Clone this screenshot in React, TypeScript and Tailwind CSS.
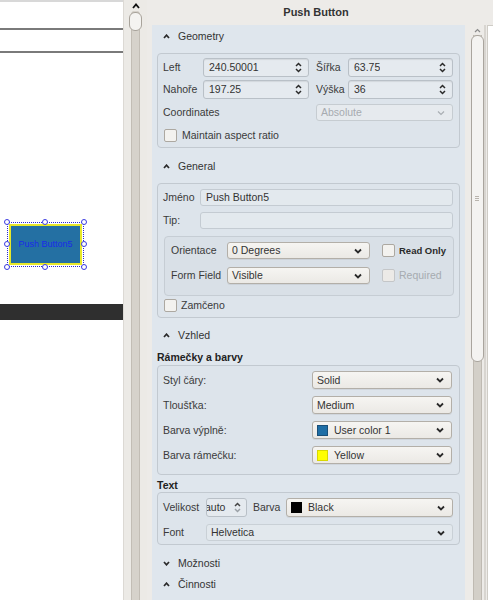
import React from "react";

const FONT = { fontFamily: '"Liberation Sans", Arial, sans-serif' };

function SpinArrows({ disabled }: { disabled?: boolean }) {
  const c = disabled ? "#9aa0a6" : "#2a2a2a";
  return (
    <svg width="7" height="11" viewBox="0 0 7 11" className="shrink-0">
      <path d="M1 4 L3.5 1.5 L6 4" fill="none" stroke={disabled ? "#444" : c} strokeWidth="1.5" />
      <path d="M1 7 L3.5 9.5 L6 7" fill="none" stroke={c} strokeWidth="1.5" />
    </svg>
  );
}

function ComboArrow({ disabled }: { disabled?: boolean }) {
  const c = disabled ? "#a9aeb3" : "#2a2a2a";
  return (
    <svg width="8" height="6" viewBox="0 0 8 6" className="shrink-0">
      <path d="M1 1.5 L4 4.5 L7 1.5" fill="none" stroke={c} strokeWidth={disabled ? 1.2 : 1.8} />
    </svg>
  );
}

function Caret({ down }: { down?: boolean }) {
  return (
    <svg width="7" height="5" viewBox="0 0 7 5" className="shrink-0">
      {down ? (
        <path d="M1 1 L3.5 3.8 L6 1" fill="none" stroke="#2a2a2a" strokeWidth="1.7" />
      ) : (
        <path d="M1 4 L3.5 1.2 L6 4" fill="none" stroke="#2a2a2a" strokeWidth="1.7" />
      )}
    </svg>
  );
}

function SpinBox({ value, className }: { value: string; className: string }) {
  return (
    <div
      className={`h-[19px] flex items-center justify-between pl-[5px] pr-[6px] rounded-[3px] border border-[#b9c0c7] bg-[#e5eaef] shadow-[inset_0_1px_1px_rgba(0,0,0,0.08)] text-[#333] ${className}`}
    >
      <span className="whitespace-nowrap overflow-hidden">{value}</span>
      <SpinArrows />
    </div>
  );
}

function Combo({
  children,
  className,
  disabled,
  flat,
}: {
  children: React.ReactNode;
  className: string;
  disabled?: boolean;
  flat?: boolean;
}) {
  const style = disabled
    ? "border-[#c6ccd1] bg-[#e6eaee] text-[#a6abb0]"
    : flat
    ? "border-[#c9d0d6] bg-[#e2e8ed] text-[#333]"
    : "border-[#b3afa8] bg-gradient-to-b from-[#f6f5f2] to-[#ebe9e5] text-[#333] shadow-[0_1px_0_rgba(0,0,0,0.06)]";
  return (
    <div
      className={`flex items-center justify-between pl-[4px] pr-[7px] rounded-[3px] border ${style} ${className}`}
    >
      <div className="flex items-center gap-[4px] whitespace-nowrap">{children}</div>
      <ComboArrow disabled={disabled} />
    </div>
  );
}

function Check({ disabled }: { disabled?: boolean }) {
  return (
    <div
      className={`w-[13px] h-[13px] rounded-[2px] border shrink-0 ${
        disabled ? "border-[#c4c6c8] bg-[#eceae7]" : "border-[#aca8a1] bg-[#f3f2ef]"
      }`}
    />
  );
}

function Header({ label, down }: { label: string; down?: boolean }) {
  return (
    <div className="h-[16px] flex items-center pl-[6px] gap-[8px] text-[#333]">
      <Caret down={down} />
      <span>{label}</span>
    </div>
  );
}

export default function App() {
  return (
    <div
      className="w-[493px] h-[600px] flex overflow-hidden bg-[#edebe8] text-[10.5px] leading-none text-[#3a3a3a]"
      style={FONT}
    >
      {/* Left canvas */}
      <div className="w-[123px] h-full bg-white flex flex-col shrink-0 border-t-2 border-[#d8d8d8]">
        <div className="h-[26px]" />
        <div className="h-[2px] bg-[#7a7a7a]" />
        <div className="h-[21px]" />
        <div className="h-[2px] bg-[#7a7a7a]" />
        <div className="h-[169px]" />
        <div className="h-[46px] pl-[7px] flex items-start">
          <div className="relative w-[77px] h-[45px]">
            <div className="absolute inset-0 border border-dotted border-[#2a2ad0]" />
            <div className="absolute left-[2px] top-[2px] right-[2px] bottom-[2px] border-2 border-[#e8e82a] bg-[#2470a3] flex items-center justify-center">
              <span className="text-[9px] text-[#1a2be8]">Push Button5</span>
            </div>
            {[
              "left-[-3px] top-[-3px]",
              "left-[35px] top-[-3px]",
              "right-[-3px] top-[-3px]",
              "left-[-3px] top-[19px]",
              "right-[-3px] top-[19px]",
              "left-[-3px] bottom-[-3px]",
              "left-[35px] bottom-[-3px]",
              "right-[-3px] bottom-[-3px]",
            ].map((p) => (
              <div key={p} className={`absolute w-[6px] h-[6px] rounded-full border border-[#3a3ae0] bg-white ${p}`} />
            ))}
          </div>
        </div>
        <div className="h-[36px]" />
        <div className="h-[16px] bg-[#2f2f2f]" />
      </div>

      {/* Left scrollbar */}
      <div className="w-[24px] h-full shrink-0 flex flex-col items-center border-l border-[#dcd9d4] bg-[#eceae6]">
        <div className="h-[11px] flex items-center justify-center">
          <svg width="8" height="6" viewBox="0 0 8 6">
            <path d="M1 5 L4 1.5 L7 5" fill="none" stroke="#111" strokeWidth="1.8" />
          </svg>
        </div>
        <div className="relative flex-1 w-[9px] bg-[#d6d2cb] border-x border-[#c2bdb5] rounded-t-[4px]">
          <div className="absolute left-[-3px] top-[1px] w-[13px] h-[19px] rounded-[6px] border border-[#a8a39b] bg-[#f4f3f1]" />
        </div>
      </div>

      {/* Dock */}
      <div className="flex-1 h-full flex flex-col">
        <div className="h-[25px] flex items-center">
          <div className="w-[338px] text-center font-bold text-[11px] text-[#333]">Push Button</div>
        </div>
        <div className="flex-1 flex">
          <div className="w-[5px]" />
          {/* Blue panel */}
          <div className="w-[313px] bg-[#dfe6ed] px-[5px] pt-[3px] flex flex-col">
            <Header label="Geometry" />
            {/* Geometry box */}
            <div className="mt-[9px] h-[95px] rounded-[4px] border border-[#c2c9d0] bg-[#dde4eb] pl-[5px] pr-[6px] pt-[4px] flex flex-col">
              <div className="flex items-center h-[19px]">
                <span className="w-[40px]">Left</span>
                <SpinBox value="240.50001" className="w-[106px]" />
                <span className="w-[32px] ml-[7px]">Šířka</span>
                <SpinBox value="63.75" className="w-[105px]" />
              </div>
              <div className="flex items-center h-[19px] mt-[3px]">
                <span className="w-[40px]">Nahoře</span>
                <SpinBox value="197.25" className="w-[106px]" />
                <span className="w-[32px] ml-[7px]">Výška</span>
                <SpinBox value="36" className="w-[105px]" />
              </div>
              <div className="flex items-center justify-between h-[17px] mt-[5px]">
                <span>Coordinates</span>
                <Combo disabled className="w-[137px] h-[17px]">
                  <span>Absolute</span>
                </Combo>
              </div>
              <div className="flex items-center h-[13px] mt-[8px] gap-[5px] pl-[1px]">
                <Check />
                <span>Maintain aspect ratio</span>
              </div>
            </div>

            <div className="mt-[10px]">
              <Header label="General" />
            </div>
            {/* General box */}
            <div className="mt-[9px] h-[135px] rounded-[4px] border border-[#c2c9d0] bg-[#dde4eb] pl-[5px] pr-[6px] pt-[5px] flex flex-col">
              <div className="flex items-center h-[17px]">
                <span className="w-[37px]">Jméno</span>
                <div className="flex-1 h-[17px] rounded-[3px] border border-[#c4cbd2] bg-[#e3e9ee] flex items-center pl-[5px] text-[#333]">
                  Push Button5
                </div>
              </div>
              <div className="flex items-center h-[17px] mt-[6px]">
                <span className="w-[37px]">Tip:</span>
                <div className="flex-1 h-[17px] rounded-[3px] border border-[#c4cbd2] bg-[#e3e9ee]" />
              </div>
              <div className="mt-[7px] ml-[1px] mr-[-1px] h-[60px] rounded-[4px] border border-[#c6cdd4] bg-[#d9e0e7] pl-[6px] pt-[5px] flex flex-col">
                <div className="flex items-center h-[17px]">
                  <span className="w-[56px]">Orientace</span>
                  <Combo className="w-[143px] h-[17px]">
                    <span>0 Degrees</span>
                  </Combo>
                  <div className="ml-[12px]">
                    <Check />
                  </div>
                  <span className="ml-[4px] font-bold text-[9.5px] text-[#2a2a2a]">Read Only</span>
                </div>
                <div className="flex items-center h-[17px] mt-[8px]">
                  <span className="w-[56px]">Form Field</span>
                  <Combo className="w-[143px] h-[17px]">
                    <span>Visible</span>
                  </Combo>
                  <div className="ml-[12px]">
                    <Check disabled />
                  </div>
                  <span className="ml-[4px] text-[#a6abb0]">Required</span>
                </div>
              </div>
              <div className="flex items-center h-[13px] mt-[3px] gap-[4px] pl-[1px]">
                <Check />
                <span>Zamčeno</span>
              </div>
            </div>

            <div className="mt-[9px]">
              <Header label="Vzhled" />
            </div>
            <div className="mt-[7px] h-[14px] flex items-center font-bold text-[#222]">Rámečky a barvy</div>
            {/* Appearance box */}
            <div className="mt-[1px] h-[110px] rounded-[4px] border border-[#c2c9d0] bg-[#dde4eb] pl-[5px] pr-[7px] pt-[5px] flex flex-col gap-[7px]">
              {[
                ["Styl čáry:", <span key="a">Solid</span>],
                ["Tloušťka:", <span key="b">Medium</span>],
                [
                  "Barva výplně:",
                  <>
                    <span className="w-[11px] h-[11px] bg-[#1f6ea5] border border-[#1a4f78]" />
                    <span className="ml-[2px]">User color 1</span>
                  </>,
                ],
                [
                  "Barva rámečku:",
                  <>
                    <span className="w-[11px] h-[11px] bg-[#ffff00] border border-[#d8d800]" />
                    <span className="ml-[2px]">Yellow</span>
                  </>,
                ],
              ].map(([label, content], i) => (
                <div key={i} className="flex items-center justify-between h-[18px]">
                  <span>{label}</span>
                  <Combo className="w-[140px] h-[18px]">{content}</Combo>
                </div>
              ))}
            </div>

            <div className="mt-[3px] h-[14px] flex items-center font-bold text-[#222]">Text</div>
            {/* Text box */}
            <div className="h-[53px] rounded-[4px] border border-[#c2c9d0] bg-[#dde4eb] pl-[5px] pr-[6px] pt-[5px] flex flex-col">
              <div className="flex items-center h-[19px]">
                <span className="w-[43px]">Velikost</span>
                <div className="w-[41px] h-[19px] rounded-[3px] border border-[#b9c0c7] bg-[#e5eaef] flex items-center justify-between pr-[5px] overflow-hidden">
                  <span className="ml-[-2px] text-[#333]">auto</span>
                  <SpinArrows disabled />
                </div>
                <span className="ml-[6px] w-[33px]">Barva</span>
                <Combo className="w-[167px] h-[19px]">
                  <span className="w-[11px] h-[11px] bg-black" />
                  <span className="ml-[2px]">Black</span>
                </Combo>
              </div>
              <div className="flex items-center h-[17px] mt-[7px]">
                <span className="w-[43px]">Font</span>
                <Combo flat className="flex-1 h-[17px]">
                  <span>Helvetica</span>
                </Combo>
              </div>
            </div>

            <div className="mt-[10px]">
              <Header label="Možnosti" down />
            </div>
            <div className="mt-[5px]">
              <Header label="Činnosti" />
            </div>
          </div>
          <div className="w-[5px]" />
          {/* Right scrollbar */}
          <div className="w-[14px] flex flex-col items-center">
            <div className="h-[8px] flex items-end mb-[2px]">
              <svg width="7" height="5" viewBox="0 0 7 5">
                <path d="M1 4 L3.5 1.5 L6 4" fill="none" stroke="#8a8a8a" strokeWidth="1.2" />
              </svg>
            </div>
            <div className="relative flex-1 w-[9px] bg-[#d3cfc8] border-x border-[#bfbab2]">
              <div className="absolute left-[-3px] top-[0px] w-[13px] h-[327px] rounded-[6px] border border-[#aaa59e] bg-[#f4f3f1] flex items-center justify-center">
                <div className="flex flex-col gap-[1px]">
                  <div className="w-[4px] h-[1px] bg-[#b9b4ad]" />
                  <div className="w-[4px] h-[1px] bg-[#b9b4ad]" />
                  <div className="w-[4px] h-[1px] bg-[#b9b4ad]" />
                </div>
              </div>
            </div>
          </div>
          <div className="w-[2px] bg-[#d8d5d0]" />
          <div className="flex-1 flex flex-col">
            <div className="flex-1 ml-[1px] bg-white border-l border-t border-[#cfccc6]" />
          </div>
        </div>
      </div>
    </div>
  );
}
